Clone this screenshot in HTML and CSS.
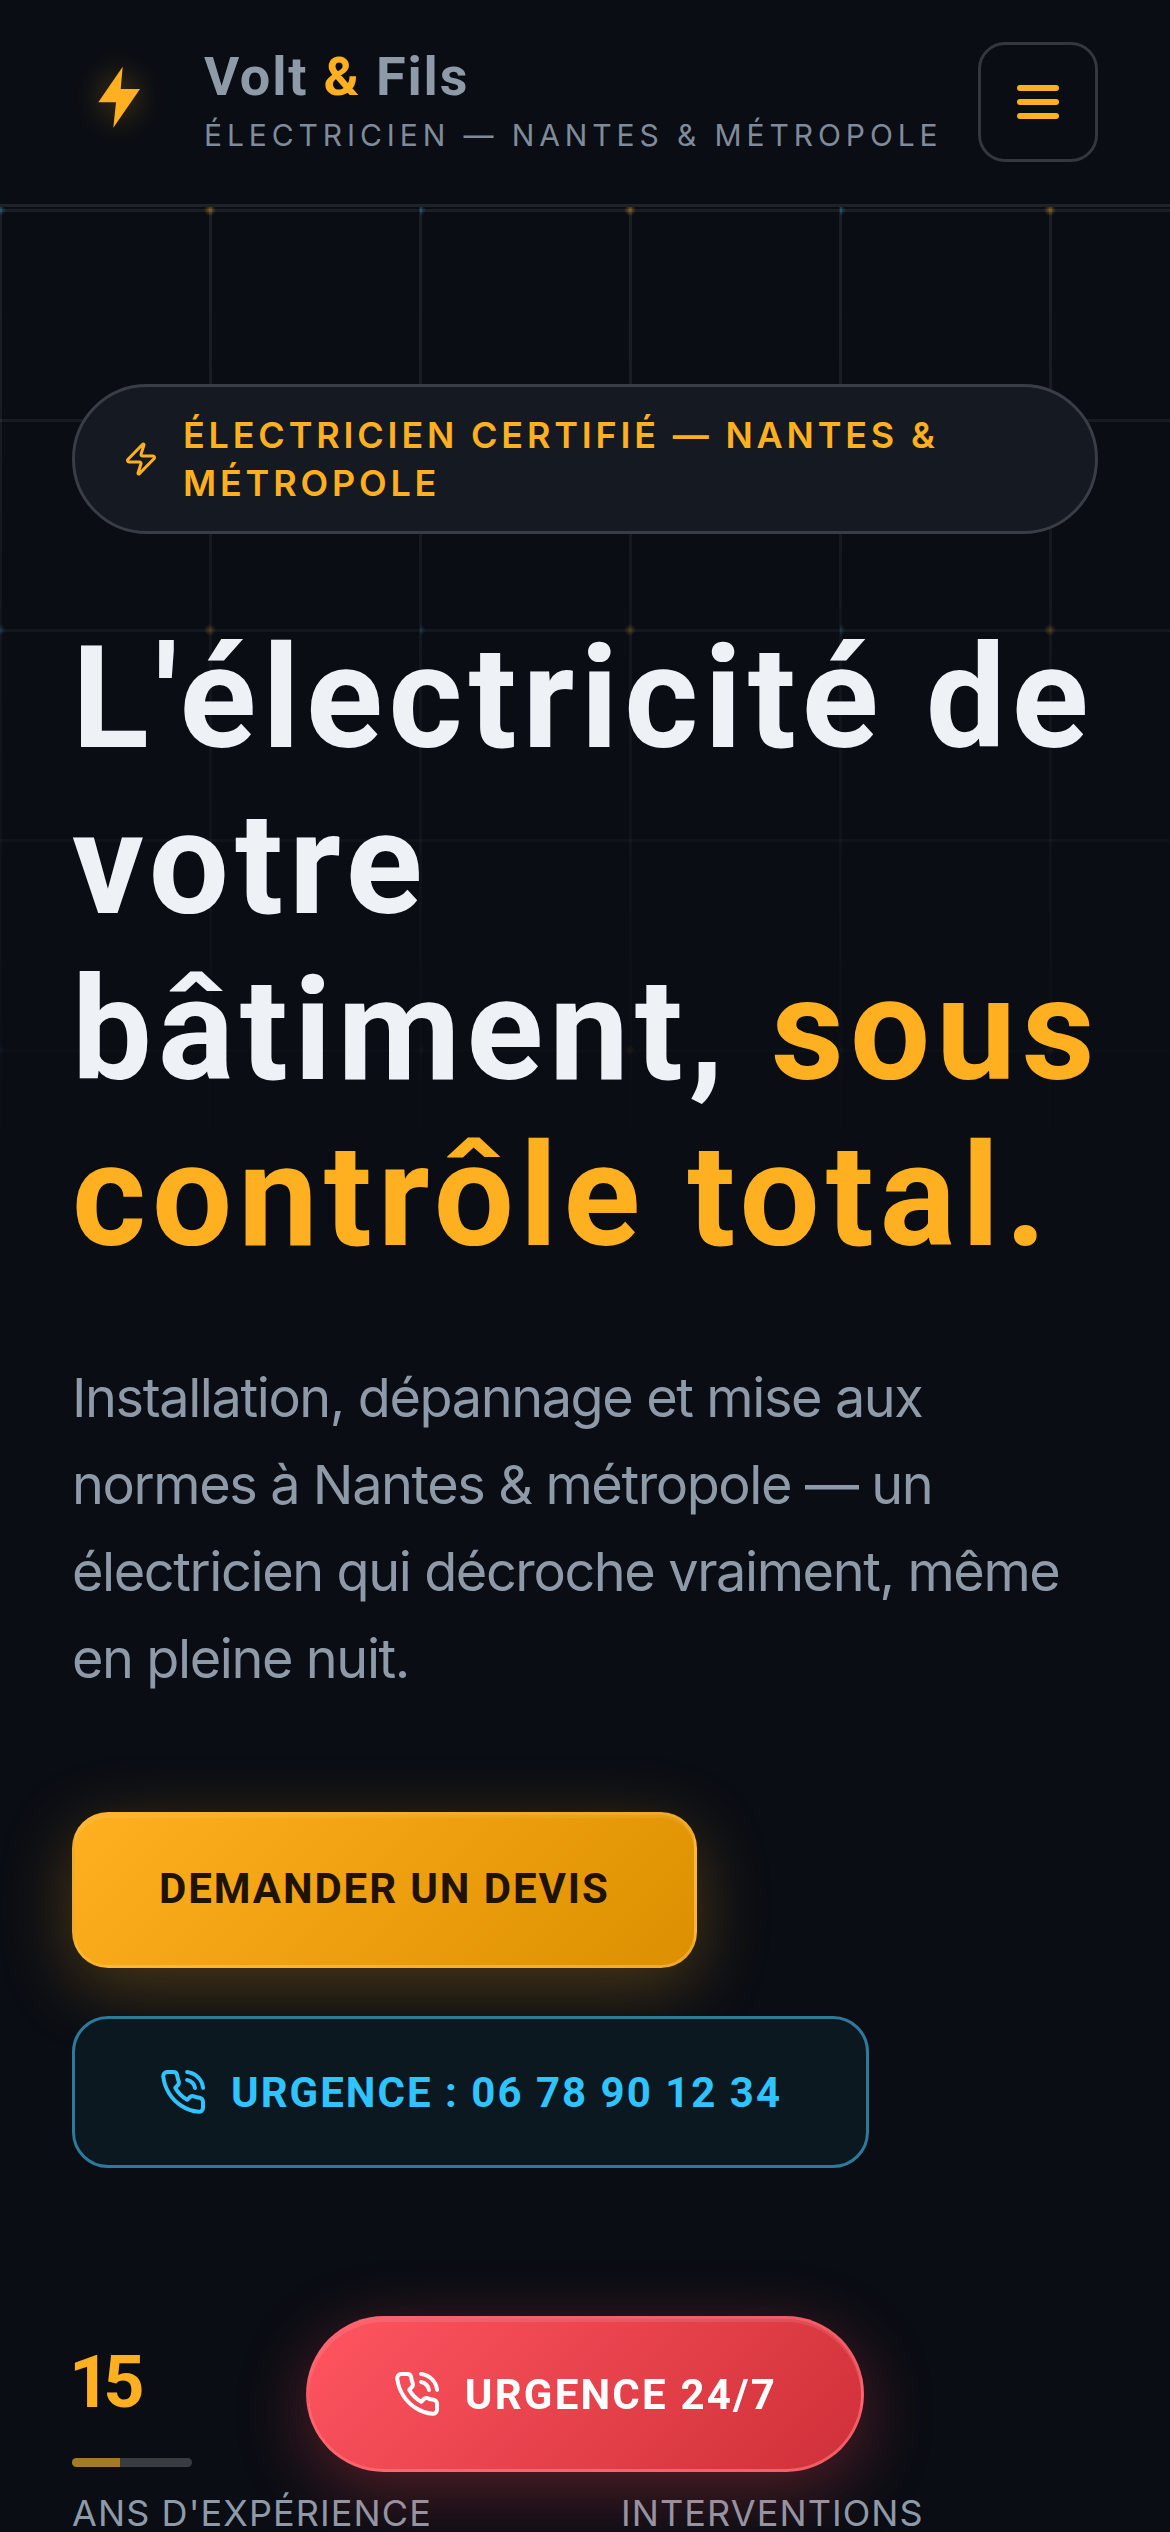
FILE: index.html
```html
<!DOCTYPE html>
<html lang="fr">
<head>
<meta charset="utf-8">
<title>Volt &amp; Fils — Électricien Nantes &amp; Métropole</title>
<link rel="stylesheet" href="styles.css">
</head>
<body>
<div class="grid" aria-hidden="true"></div>
<header class="header">
  <div class="brand">
    <svg class="brand-bolt" viewBox="0 0 108 108"><polygon points="50.7,22.7 26.3,58.3 44,58.3 41.3,83.7 68,45 48.7,45"/></svg>
    <div class="brand-text">
      <div class="brand-name">Volt <span class="amber">&amp;</span> Fils</div>
      <div class="brand-sub">Électricien — Nantes &amp; Métropole</div>
    </div>
  </div>
  <button class="menu" aria-label="Menu"><span></span><span></span><span></span></button>
</header>
<main class="hero">
  <div class="badge">
    <svg class="badge-icon" viewBox="0 0 24 24"><path d="M4 14a1 1 0 0 1-.78-1.63l9.9-10.2a.5.5 0 0 1 .86.46l-1.92 6.02A1 1 0 0 0 13 10h7a1 1 0 0 1 .78 1.63l-9.9 10.2a.5.5 0 0 1-.86-.46l1.92-6.02A1 1 0 0 0 11 14z"/></svg>
    <span class="badge-text">Électricien certifié — Nantes &amp; Métropole</span>
  </div>
  <h1 class="title">L'électricité de<br>votre<br>bâtiment, <span class="amber">sous<br>contrôle total.</span></h1>
  <p class="lead">Installation, dépannage et mise aux normes à Nantes &amp; métropole — un électricien qui décroche vraiment, même en pleine nuit.</p>
  <div class="actions">
    <a class="btn btn-primary">Demander un devis</a>
    <a class="btn btn-secondary">
      <svg class="phone" viewBox="0 0 24 24"><path d="M22 16.92v3a2 2 0 0 1-2.18 2 19.79 19.79 0 0 1-8.63-3.07 19.5 19.5 0 0 1-6-6 19.79 19.79 0 0 1-3.07-8.67A2 2 0 0 1 4.11 2h3a2 2 0 0 1 2 1.72 12.84 12.84 0 0 0 .7 2.81 2 2 0 0 1-.45 2.11L8.09 9.91a16 16 0 0 0 6 6l1.27-1.27a2 2 0 0 1 2.11-.45 12.84 12.84 0 0 0 2.81.7A2 2 0 0 1 22 16.92z"/><path d="M14.05 2a9 9 0 0 1 8 7.94"/><path d="M14.05 6A5 5 0 0 1 18 10"/></svg>
      Urgence : 06 78 90 12 34
    </a>
  </div>
  <div class="stats">
    <div class="stat">
      <div class="stat-num">15</div>
      <div class="stat-bar"><span class="stat-fill"></span></div>
      <div class="stat-label">Ans d'expérience</div>
    </div>
    <div class="stat">
      <div class="stat-label">Interventions</div>
    </div>
  </div>
</main>
<a class="fab">
  <svg class="phone" viewBox="0 0 24 24"><path d="M22 16.92v3a2 2 0 0 1-2.18 2 19.79 19.79 0 0 1-8.63-3.07 19.5 19.5 0 0 1-6-6 19.79 19.79 0 0 1-3.07-8.67A2 2 0 0 1 4.11 2h3a2 2 0 0 1 2 1.72 12.84 12.84 0 0 0 .7 2.81 2 2 0 0 1-.45 2.11L8.09 9.91a16 16 0 0 0 6 6l1.27-1.27a2 2 0 0 1 2.11-.45 12.84 12.84 0 0 0 2.81.7A2 2 0 0 1 22 16.92z"/><path d="M14.05 2a9 9 0 0 1 8 7.94"/><path d="M14.05 6A5 5 0 0 1 18 10"/></svg>
  Urgence 24/7
</a>
</body>
</html>
```

FILE: styles.css
```css
* { box-sizing: border-box; }
html, body { margin: 0; height: 2532px; overflow: hidden; }
body {
  position: relative;
  background: #0a0d14;
  color: #eef2f7;
  font-family: "Inter", sans-serif;
}
.amber { color: #ffb020; }

.grid {
  position: absolute;
  top: 0; left: 0; right: 0;
  height: 1320px;
  background-image:
    radial-gradient(circle at 210px 210px, rgba(255,176,32,.4) 0, transparent 6px),
    radial-gradient(circle at 0 210px, rgba(47,192,255,.3) 0, transparent 6px),
    linear-gradient(rgba(255,255,255,.07) 3px, transparent 3px),
    linear-gradient(90deg, rgba(255,255,255,.07) 3px, transparent 3px);
  background-size: 420px 420px, 420px 420px, 210px 210px, 210px 210px;
  background-position: 0 0, 0 0, 0 -1px, -1px 0;
  -webkit-mask-image: linear-gradient(#000 22%, rgba(0,0,0,.45) 58%, transparent 92%);
  mask-image: linear-gradient(#000 22%, rgba(0,0,0,.45) 58%, transparent 92%);
}

.header {
  position: relative;
  height: 207px;
  padding: 42px 72px 0;
  display: flex;
  justify-content: space-between;
  align-items: flex-start;
  background: #0a0d14;
  border-bottom: 3px solid #1f2328;
}
.brand { display: flex; align-items: center; gap: 24px; }
.brand-bolt {
  width: 108px; height: 108px;
  fill: #ffb020;
  filter: drop-shadow(0 0 16px rgba(255,176,32,.4));
}
.brand-text { display: flex; flex-direction: column; gap: 9px; margin-top: 4px; }
.brand-name {
  font-family: "Roboto", sans-serif;
  font-weight: 700;
  font-size: 54px;
  line-height: 62px;
  letter-spacing: 1.8px;
  color: #8e9aa8;
}
.brand-sub {
  font-family: "Inter", sans-serif;
  font-size: 30px;
  line-height: 36px;
  letter-spacing: 4.9px;
  text-transform: uppercase;
  color: #808b9a;
}
.menu {
  width: 120px; height: 120px;
  padding: 0;
  display: flex;
  flex-direction: column;
  align-items: center;
  justify-content: center;
  gap: 8px;
  background: transparent;
  border: 3px solid #33373e;
  border-radius: 27px;
}
.menu span { width: 42px; height: 6px; border-radius: 3px; background: #ffb020; }

.hero { position: relative; padding: 177px 72px 0; }
.badge {
  display: flex;
  align-items: center;
  gap: 24px;
  padding: 24px 48px;
  background: #151a22;
  border: 3px solid #393d45;
  border-radius: 75px;
}
.badge-icon {
  width: 36px; height: 36px;
  flex: none;
  fill: none;
  stroke: #ffb020;
  stroke-width: 2;
  stroke-linecap: round;
  stroke-linejoin: round;
}
.badge-text {
  font-family: "Inter", sans-serif;
  font-size: 36px;
  line-height: 48px;
  font-weight: 600;
  letter-spacing: 3.8px;
  text-transform: uppercase;
  color: #ffb020;
}

.title {
  margin: 82px 0 0;
  font-family: "Roboto", sans-serif;
  font-weight: 700;
  font-size: 142px;
  line-height: 166px;
  letter-spacing: 6px;
  white-space: nowrap;
  color: #eef2f7;
}
.lead {
  margin: 74px 0 0;
  max-width: 1026px;
  font-size: 54px;
  line-height: 87px;
  letter-spacing: -1.4px;
  color: #8e9aa8;
}

.actions {
  margin-top: 110px;
  display: flex;
  flex-direction: column;
  align-items: flex-start;
  gap: 48px;
}
.btn {
  display: flex;
  align-items: center;
  gap: 24px;
  font-family: "Roboto", sans-serif;
  font-weight: 700;
  font-size: 42px;
  letter-spacing: 1.9px;
  text-transform: uppercase;
  border-radius: 36px;
}
.btn-primary {
  height: 156px;
  padding: 0 84px 4px;
  color: #1f1300;
  background: linear-gradient(135deg, #ffb020, #dc8f00);
  border: 3px solid rgba(255,190,70,.55);
  box-shadow: 0 18px 72px rgba(255,176,32,.28), inset 0 3px 0 rgba(255,255,255,.08);
}
.btn-secondary {
  height: 152px;
  padding: 0 84px;
  letter-spacing: 2px;
  color: #2fc3ff;
  background: #0c1820;
  border: 3px solid #2e7a9c;
}
.phone {
  width: 48px; height: 48px;
  flex: none;
  fill: none;
  stroke: currentColor;
  stroke-width: 2;
  stroke-linecap: round;
  stroke-linejoin: round;
}

.stats {
  margin-top: 179px;
  display: grid;
  grid-template-columns: 1fr 1fr;
  column-gap: 72px;
}
.stat { display: flex; flex-direction: column; justify-content: flex-end; }
.stat-num {
  margin-left: -3px;
  font-family: "Roboto", sans-serif;
  font-weight: 700;
  font-size: 72px;
  line-height: 72px;
  letter-spacing: -7px;
  color: #ffb020;
}
.stat-bar {
  margin-top: 39px;
  width: 120px; height: 9px;
  border-radius: 5px;
  background: #393d42;
  overflow: hidden;
}
.stat-fill { display: block; width: 40%; height: 100%; background: #a57a25; }
.stat-label {
  margin-top: 21px;
  font-family: "Inter", sans-serif;
  font-size: 36px;
  line-height: 50px;
  letter-spacing: 1.1px;
  text-transform: uppercase;
  color: #8e9aa8;
  white-space: nowrap;
}

.fab {
  position: fixed;
  left: 306px;
  bottom: 60px;
  width: 558px;
  height: 156px;
  display: flex;
  align-items: center;
  justify-content: center;
  gap: 24px;
  font-family: "Roboto", sans-serif;
  font-weight: 700;
  font-size: 42px;
  letter-spacing: 2.2px;
  text-transform: uppercase;
  color: #fff;
  background: linear-gradient(135deg, #ff5561, #cf3038);
  border: 3px solid rgba(255,110,120,.7);
  border-radius: 78px;
  box-shadow: 0 18px 72px rgba(255,70,80,.32), inset 0 3px 0 rgba(255,255,255,.1);
}
```
